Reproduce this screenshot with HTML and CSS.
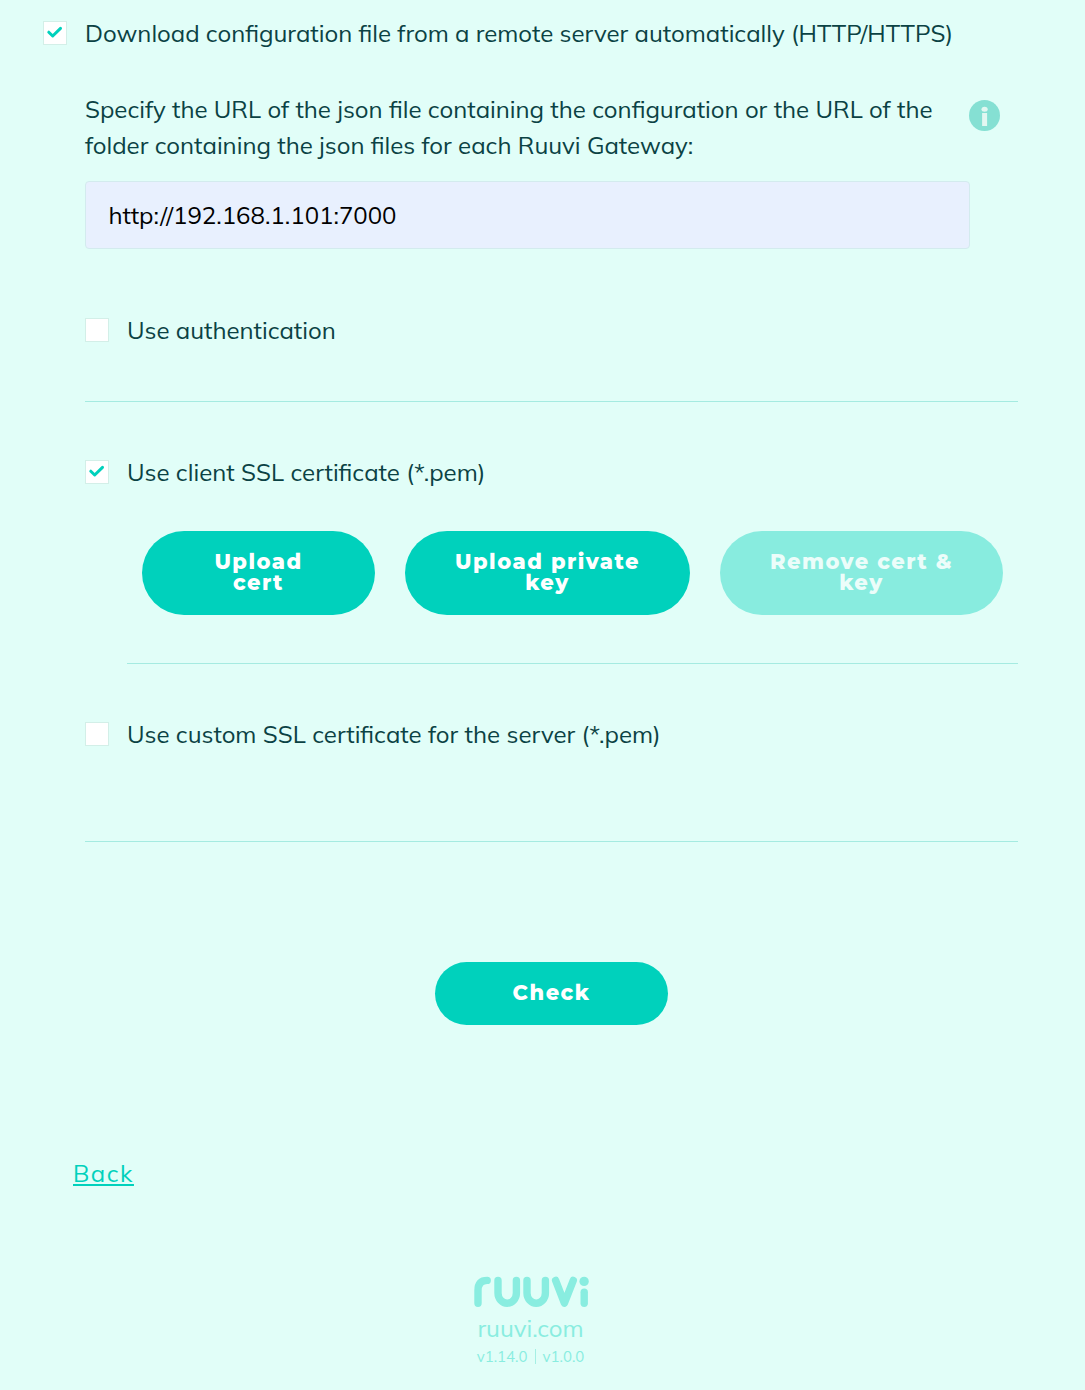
FILE: index.html
```html
<!DOCTYPE html>
<html lang="en">
<head>
<meta charset="utf-8">
<title>Ruuvi Gateway</title>
<link rel="stylesheet" href="styles.css">
</head>
<body>
<main class="page">
  <label class="option">
    <span class="box"><svg width="22" height="22" viewBox="0 0 22 22"><path d="M4.8 11.2 L8.7 15 L16.5 7.4"/></svg></span>
    <span>Download configuration file from a remote server automatically (HTTP/HTTPS)</span>
  </label>
  <div class="settings">
    <div class="url-head">
      <p class="url-text">Specify the URL of the json file containing the configuration or the URL of the<br>folder containing the json files for each Ruuvi Gateway:</p>
      <svg class="info" width="31" height="31" viewBox="0 0 31 31"><circle cx="15.5" cy="15.5" r="15.5" fill="#85e0d3"/><ellipse cx="15.6" cy="9.3" rx="3.1" ry="2.5" fill="#e2f7f1"/><rect x="13.1" y="13" width="5" height="13" fill="#e2f7f1"/></svg>
    </div>
    <div class="url-input">http://192.168.1.101:7000</div>
    <label class="option auth">
      <span class="box"></span>
      <span>Use authentication</span>
    </label>
    <hr class="rule">
    <label class="option client">
      <span class="box"><svg width="22" height="22" viewBox="0 0 22 22"><path d="M4.8 11.2 L8.7 15 L16.5 7.4"/></svg></span>
      <span>Use client SSL certificate (*.pem)</span>
    </label>
    <div class="buttons">
      <button class="btn b-cert">Upload<br>cert</button>
      <button class="btn b-key">Upload private<br>key</button>
      <button class="btn b-remove" disabled>Remove cert &amp;<br>key</button>
    </div>
    <hr class="rule inner">
    <label class="option custom">
      <span class="box"></span>
      <span>Use custom SSL certificate for the server (*.pem)</span>
    </label>
    <hr class="rule last">
    <div class="check-row"><button class="btn b-check">Check</button></div>
  </div>
  <a class="back">Back</a>
  <footer class="footer">
    <svg class="logo" width="116" height="32" viewBox="0 0 116 32"><g fill="none" stroke="#89ede0" stroke-width="7.4" stroke-linecap="round" stroke-linejoin="round"><path d="M4 27.3 V14.5 Q4 4.4 13.2 4.4"/><path d="M24 4.4 V17 A9.2 10.2 0 0 0 42.4 17 V4.4"/><path d="M53 4.4 V17 A9.2 10.2 0 0 0 71.4 17 V4.4"/><path d="M81.6 4.4 L90.4 27.2 L99.3 4.4"/><path d="M110.2 16.3 V27.3"/></g><circle cx="110.1" cy="5.4" r="4.7" fill="#89ede0"/></svg>
    <div class="site">ruuvi.com</div>
    <div class="versions"><span>v1.14.0</span><i class="bar"></i><span>v1.0.0</span></div>
  </footer>
</main>
</body>
</html>
```
FILE: styles.css
```css
* { box-sizing: border-box; }
body {
  margin: 0;
  background: #e1fef8;
  color: #0b4244;
  font: 24px/36px Mulish, Muli, Lato, sans-serif;
}
.page { height: 1390px; padding: 15px 67px 0 43px; display: flex; flex-direction: column; white-space: nowrap; }
.option { display: flex; align-items: center; gap: 18px; height: 36px; }
.box { width: 24px; height: 24px; background: #fff; border: 1px solid #d3efe8; flex: none; display: block; }
.box svg { display: block; margin-top: -1px; }
.box path { fill: none; stroke: #00d1bc; stroke-width: 3; stroke-linecap: round; stroke-linejoin: round; }
.settings { margin: 40px 0 0 42px; width: 933px; display: flex; flex-direction: column; }
.url-head { display: flex; justify-content: space-between; padding-right: 18px; height: 72px; }
.url-text { margin: 0; word-spacing: 0.06px; }
.info { margin-top: 9px; flex: none; }
.url-input {
  margin-top: 18px;
  width: 885px;
  height: 68px;
  background: #e8f0fe;
  border: 1px solid #d3ebee;
  border-radius: 4px;
  padding: 0 22.5px;
  line-height: 67px;
  color: #000;
}
.auth { margin-top: 63px; }
.rule { width: 100%; height: 1px; margin: 53px 0 0; border: 0; background: #a5ebe1; }
.client { margin-top: 52px; word-spacing: 0.12px; }
.buttons { display: flex; gap: 30px; margin: 41px 0 0 57px; }
.btn {
  border: 0;
  padding: 0 0 2px;
  height: 84px;
  border-radius: 42px;
  background: #00d1bc;
  color: #fff;
  font: 800 21px/21px Montserrat, Inter, sans-serif;
  letter-spacing: 1.47px;
  white-space: nowrap;
  text-align: center;
}
.b-cert { width: 233px; }
.b-key { width: 285px; }
.b-remove { width: 283px; background: #88ecdf; color: #ecfdfa; }
.inner { width: 891px; margin: 48px 0 0 42px; }
.custom { margin-top: 52px; word-spacing: 0.12px; }
.last { margin-top: 89px; }
.check-row { display: flex; justify-content: center; margin-top: 120px; }
.b-check { width: 233px; height: 63px; }
.back { margin: 130px 0 0 30px; align-self: flex-start; color: #00d1bc; letter-spacing: 1.5px; text-decoration: underline; text-decoration-thickness: 2px; text-underline-offset: 2px; }
.footer { width: 116px; margin: 85px 0 0 431px; color: #89ede0; display: flex; flex-direction: column; align-items: center; }
.logo { display: block; }
.site { line-height: 36px; margin: 2px 3px 1px 0; }
.versions { display: flex; align-items: center; font-size: 15px; line-height: 20px; gap: 7px; margin-right: 3px; }
.bar { width: 1px; height: 15px; margin-bottom: 2px; background: #a5efe4; }
```
